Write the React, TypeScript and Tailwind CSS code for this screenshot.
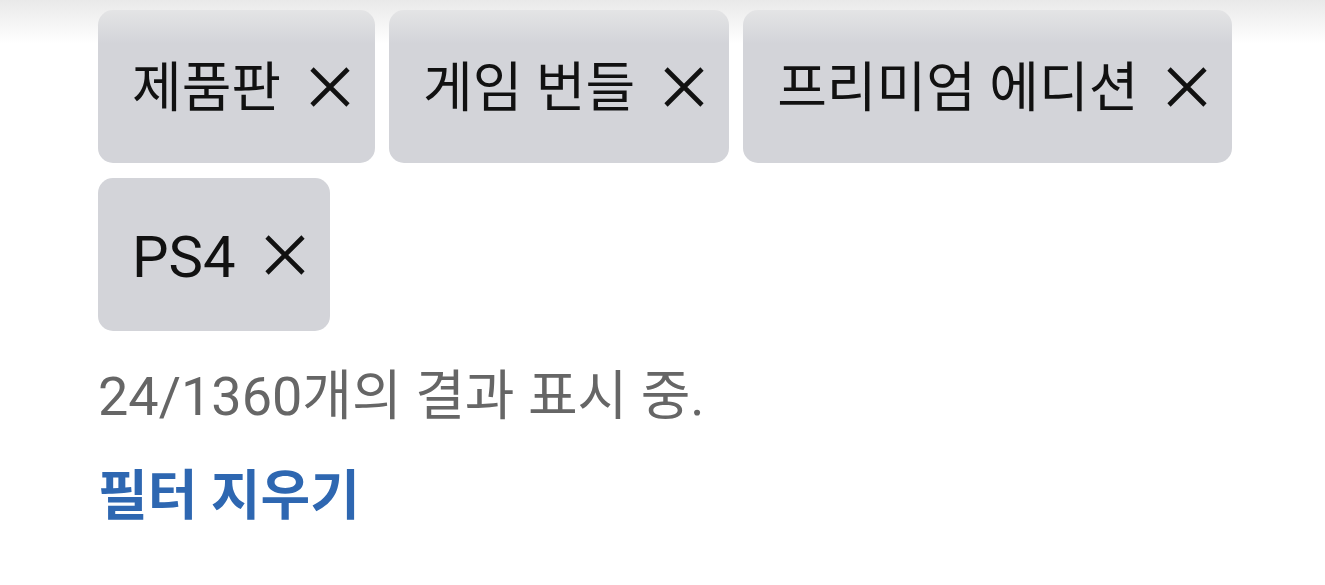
import React from "react";

const chips = [
  { label: "제품판", size: "text-[54px]" },
  { label: "게임 번들", size: "text-[54px]" },
  { label: "프리미엄 에디션", size: "text-[54px]" },
  { label: "PS4", size: "text-[58px]" },
];

function XIcon() {
  return (
    <svg width="40" height="40" viewBox="0 0 40 40" className="shrink-0">
      <path d="M2 2 L38 38 M38 2 L2 38" stroke="#111" strokeWidth="4.6" strokeLinecap="butt" />
    </svg>
  );
}

export default function App() {
  return (
    <div
      className="relative w-[1325px] h-[585px] bg-white overflow-hidden"
      style={{ fontFamily: 'Roboto, "Noto Sans CJK KR", sans-serif' }}
    >
      <div className="pl-[98px] pt-[10px] pr-[60px]">
        <div className="flex flex-wrap gap-x-[14px] gap-y-[15px]">
          {chips.map((c) => (
            <div
              key={c.label}
              className="h-[153px] rounded-[15px] bg-[#d3d4d9] pl-[34px] pr-[25px] flex items-center gap-[29px]"
            >
              <span className={`${c.size} leading-none text-[#111] pt-[4px]`}>{c.label}</span>
              <XIcon />
            </div>
          ))}
        </div>
        <div className="mt-[35px] text-[54px] leading-[62px] text-[#666666]">
          24/1360개의 결과 표시 중.
        </div>
        <div className="mt-[38px] text-[54px] leading-[62px] font-bold text-[#2e67b1]">
          필터 지우기
        </div>
      </div>
      <div className="absolute top-0 left-0 right-0 h-[44px] bg-gradient-to-b from-[#e9e9e9] to-transparent pointer-events-none" />
    </div>
  );
}
